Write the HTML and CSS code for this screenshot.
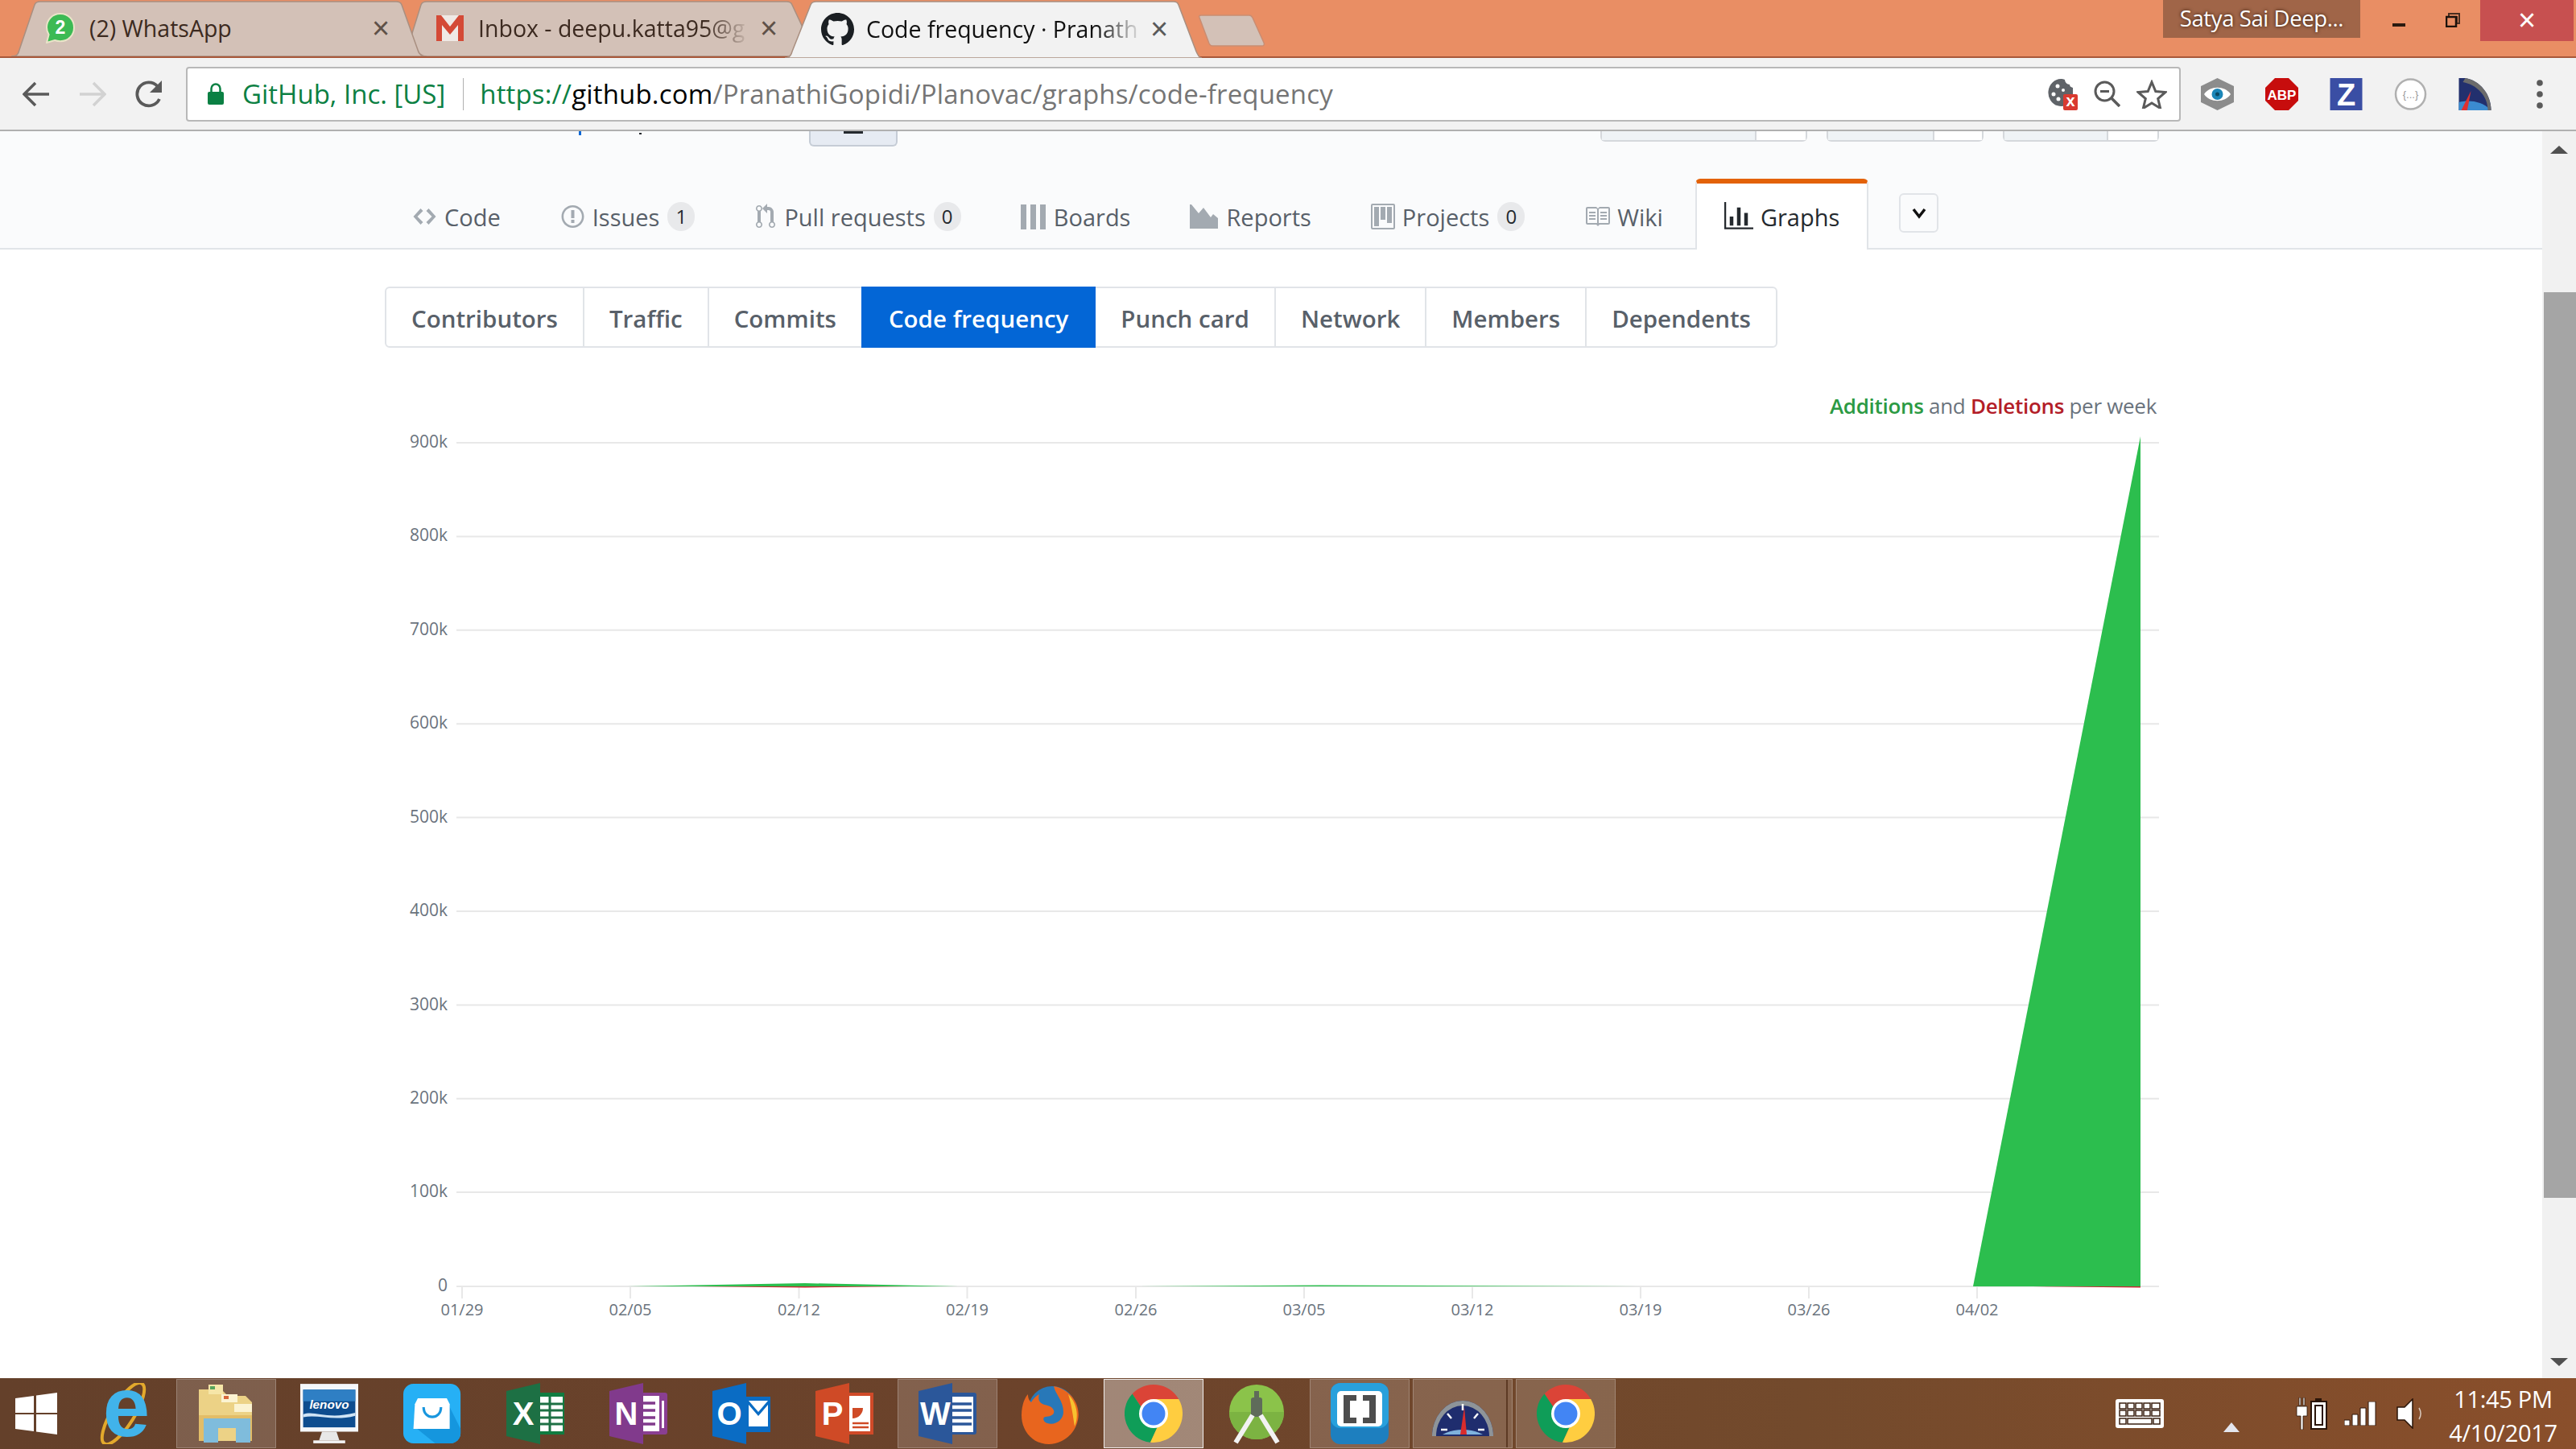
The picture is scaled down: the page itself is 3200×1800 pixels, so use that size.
FILE: index.html
```html
<!DOCTYPE html>
<html lang="en">
<head>
<meta charset="utf-8">
<title>Code frequency</title>
<link rel="stylesheet" href="styles.css">
</head>
<body>
<svg class="defs" width="0" height="0" aria-hidden="true">
  <symbol id="chrome" viewBox="0 0 72 72">
    <path fill="#db4437" d="M67.2 18A36 36 0 0 0 9.6 11.5L24 33 36 18Z"/>
    <path fill="#0f9d58" d="M9.6 11.5A36 36 0 0 0 32 71.8L42 50 24 33Z"/>
    <path fill="#ffcd40" d="M32 71.8A36 36 0 0 0 67.2 18H36L42 50Z"/>
    <circle cx="36" cy="36" r="18" fill="#fff"/>
    <circle cx="36" cy="36" r="14.5" fill="#4285f4"/>
  </symbol>
</svg>
<div class="screen">
  <header class="titlebar">
    <div class="tab tab-one">
      <svg class="tab-shape" viewBox="0 0 516 70" preserveAspectRatio="none"><path d="M0 70C8 70 9 66 10 62L29 6C30 3 32 2 36 2H478C482 2 484 3 485 6L505 62C506 66 508 70 516 70Z" fill="#d3c1b7" stroke="#a98f80" stroke-width="1.5"/></svg>
      <svg class="favicon" viewBox="0 0 36 38"><path d="M18 1C8 1 1 8.500 1 18c0 3.500 1 6.500 2.600 9L1 37l10-3c2 .8 4.500 1.200 7 1.200 10 0 17-7.500 17-17S28 1 18 1Z" fill="#3cba54" stroke="#e9e4c8" stroke-width="2"/><text x="18" y="26" class="wa-num">2</text></svg>
      <span class="tab-title">(2) WhatsApp</span>
      <span class="tab-close">×</span>
    </div>
    <div class="tab tab-two">
      <svg class="tab-shape" viewBox="0 0 511 70" preserveAspectRatio="none"><path d="M0 70 20 6C21 3 23 2 27 2H474C478 2 480 3 481 6L511 70Z" fill="#d3c1b7" stroke="#a98f80" stroke-width="1.5"/></svg>
      <svg class="favicon gmail" viewBox="0 0 38 36"><rect x="2" y="2" width="34" height="32" fill="#efe9e5"/><path d="M2 2h6l11 14L30 2h6v32h-7V14L19 26 9 14v20H2Z" fill="#d44a36"/></svg>
      <span class="tab-title fade">Inbox - deepu.katta95@g</span>
      <span class="tab-close">×</span>
    </div>
    <div class="tab tab-active">
      <svg class="tab-shape" viewBox="0 0 518 72" preserveAspectRatio="none"><path d="M0 72C6 72 8 68 9 64L32 6C33 3 35 2 39 2H483C486 2 488 3 489 6L511 64C513 68 514 72 518 72Z" fill="#f2f2f2" stroke="#a98f80" stroke-width="1.5"/></svg>
      <svg class="favicon gh" viewBox="0 0 16 16"><path fill="#1b1f23" d="M8 0C3.580 0 0 3.580 0 8c0 3.540 2.290 6.530 5.470 7.590.4.070.55-.17.55-.38 0-.19-.01-.82-.01-1.490-2.010.37-2.530-.49-2.690-.94-.09-.23-.48-.94-.82-1.130-.28-.15-.68-.52-.01-.53.63-.01 1.080.58 1.230.82.720 1.210 1.870.87 2.330.66.070-.52.28-.87.51-1.070-1.780-.2-3.640-.89-3.640-3.950 0-.87.31-1.590.82-2.150-.08-.2-.36-1.020.08-2.120 0 0 .67-.21 2.200.82.64-.18 1.320-.27 2-.27.68 0 1.360.09 2 .27 1.530-1.040 2.200-.82 2.200-.82.44 1.100.16 1.920.08 2.120.51.56.82 1.270.82 2.150 0 3.070-1.870 3.750-3.650 3.950.29.25.54.73.54 1.480 0 1.070-.01 1.930-.01 2.200 0 .21.15.46.55.38A8.013 8.013 0 0 0 16 8c0-4.420-3.580-8-8-8z"/></svg>
      <span class="tab-title fade dark">Code frequency · Pranath</span>
      <span class="tab-close">×</span>
    </div>
    <svg class="new-tab" viewBox="0 0 84 40"><path d="M2 4C1 2 2 1 4 1H64C66 1 67 2 68 4L82 35C83 37 82 39 80 39H18C16 39 15 38 14 36Z" fill="#d3c1b7" stroke="#c98d72" stroke-width="1.500"/></svg>
    <div class="window-area">
      <span class="user-chip">Satya Sai Deep...</span>
      <span class="win-min"></span>
      <svg class="win-restore" viewBox="0 0 18 18"><path d="M4 1h13v12h-3V5H4Z" fill="none" stroke="#4a2e20" stroke-width="2"/><rect x="1" y="5" width="12" height="12" fill="none" stroke="#1c120c" stroke-width="2.500"/></svg>
      <span class="win-close">×</span>
    </div>
  </header>

  <div class="toolbar">
    <svg class="nav-ico" viewBox="0 0 34 32"><path d="M33 16H3M16 2 2 16l14 14" fill="none" stroke="#5a5a5a" stroke-width="3.500"/></svg>
    <svg class="nav-ico fwd" viewBox="0 0 34 32"><path d="M1 16h30M18 2l14 14-14 14" fill="none" stroke="#d2d2d2" stroke-width="3.500"/></svg>
    <svg class="nav-ico reload" viewBox="0 0 36 36"><path d="M30 24A14.500 14.500 0 1 1 27.500 8" fill="none" stroke="#5a5a5a" stroke-width="3.800"/><path d="M33 1v15H18Z" fill="#5a5a5a"/></svg>
    <div class="omnibox">
      <svg class="lock" viewBox="0 0 20 27"><path d="M4.500 12V7a5.500 5.500 0 0 1 11 0v5" fill="none" stroke="#0b8043" stroke-width="2.500"/><rect y="11" width="20" height="16" rx="2" fill="#0b8043"/></svg>
      <span class="ev">GitHub, Inc. [US]</span>
      <span class="omni-sep"></span>
      <span class="url"><span class="ev">https://</span><span class="host">github.com</span>/PranathiGopidi/Planovac/graphs/code-frequency</span>
      <span class="omni-icons">
        <svg class="cookie" viewBox="0 0 37 40"><path d="M16 1a16 17 0 1 0 15 24V12c-3-1-4-2-4-4-3 0-6-3-6-6-2-1-3-1-5-1Z" fill="#5f6368"/><circle cx="12" cy="10" r="2.500" fill="#fff"/><circle cx="7" cy="20" r="2.500" fill="#fff"/><circle cx="19" cy="15" r="2" fill="#fff"/><circle cx="13" cy="26" r="2.500" fill="#fff"/><rect x="19" y="20" width="18" height="20" rx="2" fill="#d93a30"/><text x="28" y="35" class="cookie-x">x</text></svg>
        <svg class="zoom-ico" viewBox="0 0 33 33"><circle cx="13.500" cy="13.500" r="11.500" fill="none" stroke="#5a5a5a" stroke-width="3"/><path d="M8 13.500h11" stroke="#5a5a5a" stroke-width="3"/><path d="m21 21 11 11" stroke="#5a5a5a" stroke-width="3.500"/></svg>
        <svg class="star" viewBox="0 0 38 36"><path d="m19 3 4.800 11.500L36 15.500l-9.300 8 2.900 12L19 29l-10.600 6.500 2.900-12-9.300-8 12.200-1Z" fill="none" stroke="#5a5a5a" stroke-width="3"/></svg>
      </span>
    </div>
    <div class="extensions">
      <svg class="ext" viewBox="0 0 41 40"><path d="M20.500 0 41 10v20L20.500 40 0 30V10Z" fill="#8c8c8c"/><path d="M4 20C11 9 30 9 37 20 30 31 11 31 4 20Z" fill="#fff"/><circle cx="20.500" cy="20" r="7" fill="#1b86b8"/><circle cx="20.500" cy="20" r="2.500" fill="#0b4a66"/></svg>
      <svg class="ext" viewBox="0 0 41 40"><path d="M12 0h17l12 12v16L29 40H12L0 28V12Z" fill="#c70d0d"/><text x="20.500" y="27" class="abp">ABP</text></svg>
      <svg class="ext" viewBox="0 0 40 40"><rect width="40" height="40" fill="#3a4ea4"/><text x="20" y="34" class="zed">Z</text></svg>
      <svg class="ext" viewBox="0 0 40 40"><circle cx="20" cy="20" r="18.500" fill="#fff" stroke="#b0b0b0" stroke-width="2.500"/><text x="20" y="25" class="json">{...}</text></svg>
      <svg class="ext" viewBox="0 0 40 40"><path d="M0 0h8c18 3 32 20 32 40H0Z" fill="#22306e"/><path d="M0 30c12-3 28-2 40 10H0Z" fill="#3b8bd0"/><path d="m3 40 12-24-5 26Z" fill="#e03030"/><path d="M8 0c18 3 32 20 32 40h-4C36 22 22 8 5 5Z" fill="#6b6b6b"/></svg>
      <svg class="dots" viewBox="0 0 10 38"><circle cx="5" cy="5" r="3.800" fill="#5a5a5a"/><circle cx="5" cy="19" r="3.800" fill="#5a5a5a"/><circle cx="5" cy="33" r="3.800" fill="#5a5a5a"/></svg>
    </div>
  </div>

  <div class="viewport">
    <main class="page">
      <div class="pagehead">
        <div class="head-remnants">
          <span class="rem-link"></span>
          <span class="rem-dot"></span>
          <span class="rem-btn"><span class="rem-list"></span></span>
          <span class="rem-group first"><span class="rem-main"></span><span class="rem-count"></span></span>
          <span class="rem-group"><span class="rem-main m2"></span><span class="rem-count c2"></span></span>
          <span class="rem-group"><span class="rem-main m3"></span><span class="rem-count c3"></span></span>
        </div>
        <nav class="reponav">
          <a class="nav-item"><svg class="oct w-code" viewBox="0 0 14 16"><path d="M9.500 3 8 4.500 11.500 8 8 11.500 9.500 13 14 8 9.500 3zm-5 0L0 8l4.500 5L6 11.500 2.500 8 6 4.500 4.500 3z"/></svg>Code</a>
          <a class="nav-item"><svg class="oct w-issue" viewBox="0 0 14 16"><path d="M7 2.300c3.140 0 5.700 2.560 5.700 5.700s-2.560 5.700-5.700 5.700A5.710 5.710 0 0 1 1.300 8c0-3.140 2.560-5.700 5.700-5.700zM7 1C3.140 1 0 4.140 0 8s3.140 7 7 7 7-3.140 7-7-3.140-7-7-7zm1 3H6v5h2V4zm0 6H6v2h2v-2z"/></svg>Issues<span class="counter">1</span></a>
          <a class="nav-item"><svg class="oct w-pr" viewBox="0 0 12 16"><path d="M11 11.280V5c-.03-.78-.34-1.470-.94-2.060C9.460 2.350 8.780 2.030 8 2H7V0L4 3l3 3V4h1c.27.020.48.11.69.31.21.2.3.42.31.69v6.280A1.993 1.993 0 0 0 10 15a1.993 1.993 0 0 0 1-3.720zm-1 2.920c-.66 0-1.200-.55-1.200-1.200 0-.65.55-1.200 1.200-1.200.65 0 1.200.55 1.200 1.200 0 .65-.55 1.200-1.200 1.200zM4 3c0-1.110-.89-2-2-2a1.993 1.993 0 0 0-1 3.720v6.560A1.993 1.993 0 0 0 2 15a1.993 1.993 0 0 0 1-3.720V4.720c.59-.34 1-.98 1-1.720zm-.8 10c0 .66-.55 1.200-1.200 1.200-.65 0-1.200-.55-1.200-1.200 0-.65.55-1.200 1.200-1.200.65 0 1.200.55 1.200 1.200zM2 4.200C1.340 4.200.8 3.650.8 3c0-.65.55-1.200 1.200-1.200.65 0 1.200.55 1.200 1.200 0 .65-.55 1.200-1.200 1.200z"/></svg>Pull requests<span class="counter">0</span></a>
          <a class="nav-item"><svg class="oct w-boards" viewBox="0 0 32 32"><path d="M0 1h7v31H0zM12 1h7v31h-7zM24 1h7v31h-7z"/></svg>Boards</a>
          <a class="nav-item"><svg class="oct w-reports" viewBox="0 0 36 30"><path d="M0 0l2 0 9 11 6-7 9 12 3-4 6 5v13H0Z"/></svg>Reports</a>
          <a class="nav-item"><svg class="oct w-projects" viewBox="0 0 15 16"><path fill-rule="evenodd" d="M10 12h3V2h-3v10zm-4-2h3V2H6v8zm-4 4h3V2H2v12zm-1 1h13V1H1v14zM14 0H1a1 1 0 0 0-1 1v14a1 1 0 0 0 1 1h13a1 1 0 0 0 1-1V1a1 1 0 0 0-1-1z"/></svg>Projects<span class="counter">0</span></a>
          <a class="nav-item"><svg class="oct w-wiki" viewBox="0 0 16 16"><path d="M3 5h4v1H3V5zm0 3h4V7H3v1zm0 2h4V9H3v1zm11-5h-4v1h4V5zm0 2h-4v1h4V7zm0 2h-4v1h4V9zm2-6v9c0 .55-.45 1-1 1H9.500l-1 1-1-1H2c-.55 0-1-.45-1-1V3c0-.55.45-1 1-1h5.500l1 1 1-1H15c.55 0 1 .45 1 1zm-8 .5L7.500 3H2v9h6V3.500zm7-.5H9.500l-.5.5V12h6V3z"/></svg>Wiki</a>
          <a class="nav-item selected"><svg class="oct w-graphs" viewBox="0 0 16 16"><path d="M16 14v1H0V0h1v14h15zM5 13H3V8h2v5zm4 0H7V3h2v10zm4 0h-2V6h2v7z"/></svg>Graphs</a>
          <button class="more-btn" type="button" aria-label="More"><svg viewBox="0 0 18 14"><path d="m2 2 7 9 7-9" fill="none" stroke="#111" stroke-width="3.500"/></svg></button>
        </nav>
      </div>

      <div class="subnav">
        <a class="sub-item">Contributors</a><a class="sub-item">Traffic</a><a class="sub-item">Commits</a><a class="sub-item current">Code frequency</a><a class="sub-item">Punch card</a><a class="sub-item">Network</a><a class="sub-item">Members</a><a class="sub-item">Dependents</a>
      </div>

      <p class="legend"><b class="add">Additions</b> and <b class="del">Deletions</b> per week</p>

      <svg class="chart" viewBox="0 535 3158 1177">
        <g class="grid">
          <path d="M567 550H2682M567 666.400H2682M567 782.800H2682M567 899.200H2682M567 1015.600H2682M567 1132H2682M567 1248.400H2682M567 1364.800H2682M567 1481H2682M567 1598H2682"/>
          <path d="M574 1598v15M783 1598v15M992.500 1598v15M1201.500 1598v15M1411 1598v15M1620 1598v15M1829 1598v15M2038 1598v15M2247 1598v15M2456 1598v15"/>
        </g>
        <path class="del-area" d="M860 1598 1000 1599.500 1130 1598ZM2525 1598 2659 1599.500V1598Z"/>
        <path class="add-area" d="M780 1598 1000 1594 1190 1598ZM1415 1598 1640 1596.500 2040 1598Z"/>
        <path class="add-area solid" d="M2451 1598 2659 542V1598Z"/>
        <g class="y-labels">
          <text x="556" y="556">900k</text><text x="556" y="672">800k</text><text x="556" y="789">700k</text><text x="556" y="905">600k</text><text x="556" y="1022">500k</text><text x="556" y="1138">400k</text><text x="556" y="1255">300k</text><text x="556" y="1371">200k</text><text x="556" y="1487">100k</text><text x="556" y="1604">0</text>
        </g>
        <g class="x-labels">
          <text x="574" y="1634">01/29</text><text x="783" y="1634">02/05</text><text x="992.500" y="1634">02/12</text><text x="1201.500" y="1634">02/19</text><text x="1411" y="1634">02/26</text><text x="1620" y="1634">03/05</text><text x="1829" y="1634">03/12</text><text x="2038" y="1634">03/19</text><text x="2247" y="1634">03/26</text><text x="2456" y="1634">04/02</text>
        </g>
      </svg>
    </main>
    <aside class="scrollbar">
      <span class="arrow-up"></span>
      <span class="thumb"></span>
      <span class="arrow-down"></span>
    </aside>
  </div>

  <footer class="taskbar">
    <svg class="start" viewBox="0 0 52 52"><path fill="#fff" d="M0 7 23 4V25H0ZM26 3.500 52 0V25H26ZM0 27H23V48L0 45ZM26 27H52V52L26 48.500Z"/></svg>
    <div class="apps">
      <div class="app"><svg class="app-ico" viewBox="0 0 72 76"><ellipse cx="36" cy="38" rx="14" ry="44" transform="rotate(32 36 38)" fill="none" stroke="#e3a92c" stroke-width="4"/><text x="40" y="66" class="ie">e</text></svg></div>
      <div class="app on"><svg class="app-ico" viewBox="0 0 72 76"><path d="M2 8h28l8 8h22l8 8v48H2Z" fill="#ecd286"/><rect x="14" y="2" width="18" height="12" fill="#f6e6a8"/><rect x="30" y="14" width="20" height="10" fill="#fbf3d2"/><rect x="46" y="26" width="22" height="10" fill="#fbf3d2"/><rect x="16" y="4" width="6" height="4" fill="#58a55c"/><rect x="33" y="16" width="6" height="4" fill="#d8683c"/><path d="M2 40h66v32H48V54H24v18H2Z" fill="#e2bd68"/><path d="M8 44h58v30H48V56H26v18H8Z" fill="#7fbcdc"/></svg></div>
      <div class="app"><svg class="app-ico" viewBox="0 0 80 82"><rect width="80" height="66" fill="#f5f7fa"/><rect x="4" y="8" width="72" height="52" fill="#0d4d8f"/><rect x="4" y="8" width="72" height="16" fill="#2f7fc4"/><text x="40" y="34" class="lenovo">lenovo</text><path d="M4 42c16-6 32 8 72-2v4c-30 8-50-2-72 2Z" fill="#cfe4f5"/><path d="M30 66h20l4 12H26Z" fill="#e8e8e8"/><rect x="18" y="78" width="44" height="4" fill="#f3f3f3"/></svg></div>
      <div class="app"><svg class="app-ico" viewBox="0 0 80 82"><rect width="79" height="82" rx="14" fill="#26b0f5"/><path d="M62 28 79 62v6a14 14 0 0 1-14 14H44L14 58Z" fill="#1596de"/><path d="M16 28 20 20H60l4 8v34H14Z" fill="#fff"/><path d="M28 32c0 18 24 18 24 0" fill="none" stroke="#1896de" stroke-width="3.500"/></svg></div>
      <div class="app"><svg class="app-ico" viewBox="0 0 72 76"><rect x="36" y="12" width="36" height="52" fill="#107c41"/><path d="M0 10 42 0V76L0 66Z" fill="#1d7044"/><path d="M42 17h28v43H42Z" fill="#fff"/><path d="M42 26h28M42 34h28M42 43h28M42 51h28M54 17v43" stroke="#1d7044" stroke-width="3"/><text x="21" y="52" class="letter">X</text></svg></div>
      <div class="app"><svg class="app-ico" viewBox="0 0 72 76"><rect x="38" y="12" width="34" height="52" rx="3" fill="#8a3f92"/><path d="M0 10 42 0V76L0 66Z" fill="#813a8c"/><path d="M42 16h20v44H42Z" fill="#fff"/><path d="M42 25h15M42 34h15M42 43h15M42 51h15" stroke="#813a8c" stroke-width="3.500"/><rect x="65" y="22" width="3" height="34" fill="#fff"/><text x="21" y="52" class="letter">N</text></svg></div>
      <div class="app"><svg class="app-ico" viewBox="0 0 72 76"><path d="M0 10 42 0V76L0 66Z" fill="#0a6cc4"/><rect x="42" y="17" width="30" height="44" fill="#0a6cc4"/><path d="M45 22h24L57 36Z" fill="#fff"/><path d="M45 27v27h24V27L57 41Z" fill="#fff"/><text x="21" y="52" class="letter">O</text></svg></div>
      <div class="app"><svg class="app-ico" viewBox="0 0 72 76"><rect x="38" y="12" width="34" height="52" fill="#d04a28"/><path d="M0 10 42 0V76L0 66Z" fill="#cf4a26"/><path d="M42 16h26v44H42Z" fill="#fff"/><path d="M46 18a13 13 0 1 1 0 26V31h13a13 13 0 0 0-13-13Z" fill="#cf4a26"/><path d="M46 50h20M46 55h20" stroke="#cf4a26" stroke-width="2.500"/><text x="21" y="52" class="letter">P</text></svg></div>
      <div class="app on"><svg class="app-ico" viewBox="0 0 72 76"><rect x="38" y="12" width="34" height="52" rx="3" fill="#2b579a"/><path d="M0 10 42 0V76L0 66Z" fill="#2b579a"/><path d="M42 17h26v44H42Z" fill="#fff"/><path d="M42 26h24M42 34h24M42 43h24M42 51h24" stroke="#2b579a" stroke-width="3.500"/><text x="21" y="52" class="letter">W</text></svg></div>
      <div class="app"><svg class="app-ico" viewBox="0 0 72 76"><circle cx="38" cy="34" r="30" fill="#2878b8"/><path d="M40 4C62 8 74 28 70 46 66 66 48 76 34 76 14 76 0 60 0 40 0 28 4 18 8 14c0 6 2 8 4 10 2-4 6-8 10-10-2 6 0 10 4 12 4 2 12 2 14 8 2 6-6 8-10 8-4 0-4 6 2 8 10 3 20-4 20-14 0-14-10-22-12-32Z" fill="#e8651e"/><path d="M58 14c10 10 14 26 8 40-2-12-4-28-8-40Z" fill="#f7c22f"/></svg></div>
      <div class="app active"><svg class="app-ico" viewBox="0 0 72 76"><use href="#chrome"/></svg></div>
      <div class="app"><svg class="app-ico" viewBox="0 0 72 76"><circle cx="36" cy="36" r="34" fill="#8bc34a"/><path d="M2 36h68a34 34 0 0 1-68 0Z" fill="#7cb342"/><rect x="29" y="18" width="14" height="24" rx="3" fill="#5f6b5a"/><rect x="33" y="10" width="6" height="10" fill="#5f6b5a"/><path d="M31 40 10 74M41 40l21 34" stroke="#f2f2f2" stroke-width="6"/></svg></div>
      <div class="app on"><svg class="app-ico" viewBox="0 0 72 76"><rect width="72" height="76" rx="12" fill="#1d7fbf"/><rect y="0" width="72" height="56" rx="12" fill="#28a0dc"/><rect x="8" y="10" width="56" height="44" rx="5" fill="#fff"/><path d="M32 15H16V50H32V43H24V22H32ZM40 15H56V50H40V43H48V22H40Z" fill="#4d4d4d"/></svg></div>
      <div class="app on stacked"><svg class="app-ico wide" viewBox="0 0 78 76"><path d="M1 66A38 44 0 0 1 77 66Z" fill="#1f2d6e"/><path d="M1 66A38 44 0 0 1 77 66H72A33 38 0 0 0 6 66Z" fill="#8e9499"/><path d="M14 64c14-8 36-8 50 0Z" fill="#7fb2dd"/><path d="m36 64 5-34 3 34Z" fill="#d92c2c"/><path d="M12 58h8M58 58h8M20 38l5 6M58 38l-5 6M39 26v8" stroke="#fff" stroke-width="2.500"/></svg></div>
      <div class="app on"><svg class="app-ico" viewBox="0 0 72 76"><use href="#chrome"/></svg></div>
    </div>
    <div class="tray">
      <svg class="kbd" viewBox="0 0 60 36"><rect width="60" height="36" rx="3" fill="#fff"/><path d="M5 5h8v7H5zM15 5h8v7h-8zM25 5h8v7h-8zM35 5h8v7h-8zM45 5h10v7H45zM5 14h8v7H5zM15 14h8v7h-8zM25 14h8v7h-8zM35 14h8v7h-8zM45 14h10v7H45zM5 24h8v7H5zM15 24h30v7H15zM47 24h8v7h-8z" fill="#fff" stroke="#3a2012" stroke-width="1.500"/></svg>
      <span class="tray-up"></span>
      <svg class="power" viewBox="0 0 40 40"><path d="M4 0h2v10H4zM9 0h2v10H9zM1 11h13v12H9v17H6V23H1Z" fill="#fff" stroke="#2a1509" stroke-width=".8"/><path d="M24 1h8v3h7v36H18V4h6Z" fill="#2a1509"/><path d="M20 6h17v32H20Z" fill="#fff"/><path d="M23 9h11v26H23Z" fill="#2a1509"/><path d="M25 11h7v22h-7Z" fill="#fff"/></svg>
      <svg class="signal" viewBox="0 0 40 30"><path d="M0 23h7v7H0ZM10 16h7v14h-7ZM20 8h7v22h-7ZM30 0h9v30h-9Z" fill="#fff" stroke="#2a1509" stroke-width="1"/></svg>
      <svg class="speaker" viewBox="0 0 34 38"><path d="M1 11h9L20 1v36L10 27H1Z" fill="#fff" stroke="#2a1509" stroke-width="1.500"/><path d="M28 12c3 5 3 9 0 14" fill="none" stroke="#d9cabe" stroke-width="1.500"/></svg>
      <div class="clock"><span>11:45 PM</span><span>4/10/2017</span></div>
    </div>
  </footer>
</div>
</body>
</html>
```
FILE: styles.css
```css
* { box-sizing: border-box; }
html, body { margin: 0; padding: 0; }
body { width: 3200px; height: 1800px; overflow: hidden; font-family: "Open Sans", "Noto Sans", sans-serif; background: #fff; }
.defs { position: absolute; }
.screen { width: 3200px; height: 1800px; display: flex; flex-direction: column; overflow: hidden; }

/* title bar and tabs */
.titlebar { height: 72px; flex: none; display: flex; align-items: flex-start; padding-left: 14px; background: #e98e64; border-bottom: 2px solid #a8583a; }
.tab { position: relative; height: 70px; display: flex; align-items: center; flex: none; color: #3c2a20; font-size: 28.5px; }
.tab-shape { position: absolute; left: 0; top: 0; width: 100%; height: 100%; z-index: -1; }
.tab-one { width: 516px; padding: 0 42px 0 43px; z-index: 3; isolation: isolate; }
.tab-two { width: 511px; margin-left: -27px; padding: 0 44px 0 37px; z-index: 2; isolation: isolate; }
.tab-active { width: 518px; height: 72px; margin-left: -39px; padding: 0 38px 0 45px; z-index: 4; isolation: isolate; }
.favicon { width: 36px; height: 38px; flex: none; }
.gmail { width: 38px; }
.gh { width: 41px; height: 41px; }
.wa-num { fill: #fff; font: 700 23px "Liberation Sans", sans-serif; text-anchor: middle; }
.tab-title { margin-left: 18px; white-space: nowrap; }
.tab-two .tab-title { margin-left: 16px; }
.tab-active .tab-title { margin-left: 15px; color: #111; }
.fade { -webkit-mask-image: linear-gradient(90deg, #000 85%, rgba(0, 0, 0, .12) 100%); mask-image: linear-gradient(90deg, #000 85%, rgba(0, 0, 0, .12) 100%); }
.tab-close { width: 30px; margin-left: auto; flex: none; font-size: 38px; line-height: 1; text-align: center; font-family: "Liberation Sans", sans-serif; color: #5f5148; }
.tab-active .tab-close { color: #5a5a5a; }
.new-tab { width: 84px; height: 40px; margin: 18px 0 0 -5px; flex: none; }
.window-area { margin-left: auto; display: flex; align-items: flex-start; position: relative; height: 52px; }
.user-chip { width: 245px; height: 47px; background: #a06548; color: #fff; font-size: 27.5px; line-height: 46px; text-align: center; text-shadow: 0 0 4px #2a1509; letter-spacing: -.4px; }
.win-min { width: 16px; height: 4px; margin: 29px 0 0 40px; background: #2a1a10; }
.win-restore { width: 18px; height: 18px; margin: 16px 0 0 50px; }
.win-close { width: 116px; height: 51px; margin: 0 3px 0 25px; background: #c75050; color: #fff; font-family: "Liberation Sans", sans-serif; font-size: 38px; line-height: 50px; text-align: center; }

/* toolbar */
.toolbar { height: 91px; flex: none; display: flex; align-items: center; padding-left: 28px; background: #f2f2f2; border-bottom: 2px solid #b0b0b0; }
.nav-ico { width: 34px; height: 32px; flex: none; margin-right: 36px; }
.reload { width: 36px; height: 36px; margin-right: 27px; }
.omnibox { width: 2478px; height: 68px; flex: none; display: flex; align-items: center; padding-left: 25px; background: #fff; border: 2px solid #b8b8b8; border-radius: 4px; font-size: 33px; }
.lock { width: 20px; height: 27px; flex: none; margin-right: 23px; }
.ev { color: #0b8043; }
.omni-sep { width: 1px; height: 40px; margin: 0 20px 0 22px; background: #b0b0b0; }
.url { color: #757575; white-space: nowrap; letter-spacing: .17px; }
.host { color: #000; }
.omni-icons { margin-left: auto; margin-right: 15px; display: flex; align-items: center; gap: 20px; }
.cookie { width: 37px; height: 40px; }
.zoom-ico { width: 33px; height: 33px; }
.star { width: 38px; height: 36px; }
.cookie-x { fill: #fff; font: 700 20px "Liberation Sans", sans-serif; text-anchor: middle; }
.extensions { display: flex; align-items: center; gap: 39px; margin-left: 25px; }
.ext { width: 41px; height: 40px; flex: none; }
.dots { width: 10px; height: 38px; margin-left: 16px; }
.abp { fill: #fff; font: 700 17px "Liberation Sans", sans-serif; text-anchor: middle; }
.zed { fill: #fff; font: 700 38px "Liberation Sans", sans-serif; text-anchor: middle; }
.json { fill: #999; font: 13px "Liberation Sans", sans-serif; text-anchor: middle; }

/* page */
.viewport { flex: 1; display: flex; min-height: 0; }
.page { flex: 1; min-width: 0; overflow: hidden; }
.pagehead { height: 147px; background: #fafbfc; border-bottom: 2px solid #e1e4e8; position: relative; }
.head-remnants { display: flex; align-items: flex-start; height: 19px; padding-left: 719px; }
.rem-link { width: 3px; height: 5px; background: #0366d6; }
.rem-dot { width: 3px; height: 2px; margin: 2px 0 0 72px; background: #24292e; }
.rem-btn { width: 110px; height: 19px; margin-left: 208px; background: #e6ebf3; border: 2px solid #c5ccd6; border-top: 0; border-radius: 0 0 6px 6px; display: flex; justify-content: center; }
.rem-list { width: 24px; height: 3px; background: #24292e; }
.rem-group { display: flex; height: 13px; margin-left: 24px; border: 2px solid #d5d8dc; border-top: 0; border-radius: 0 0 6px 6px; }
.rem-group.first { margin-left: 873px; }
.rem-main { width: 192px; background: #eff3f6; border-right: 2px solid #d5d8dc; }
.rem-count { width: 61px; background: #fff; }
.rem-main.m2 { width: 132px; }
.rem-count.c2 { width: 59px; }
.rem-main.m3 { width: 129px; }
.rem-count.c3 { width: 61px; }
.reponav { position: absolute; left: 478px; bottom: -2px; display: flex; gap: 6px; align-items: flex-start; height: 88px; }
.nav-item { height: 88px; display: flex; align-items: center; padding: 6px 34px 0; color: #586069; font-size: 29px; white-space: nowrap; }
.oct { height: 32px; fill: #a3aab1; flex: none; margin-right: 9px; }
.w-code { width: 31px; }
.w-issue { width: 31px; }
.w-pr { width: 28px; }
.w-boards { width: 32px; }
.w-reports { width: 36px; height: 30px; }
.w-projects { width: 30px; height: 36px; }
.w-wiki { width: 32px; }
.w-graphs { width: 36px; height: 36px; fill: #24292e; }
.counter { width: 34px; height: 36px; margin-left: 10px; border-radius: 18px; background: rgba(27, 31, 35, .08); color: #24292e; font-size: 24px; line-height: 36px; text-align: center; }
.selected { padding: 0 34px; background: #fff; border: 2px solid #e1e4e8; border-top: 6px solid #e36209; border-bottom: 0; border-radius: 6px 6px 0 0; color: #24292e; }
.more-btn { width: 49px; height: 49px; margin: 18px 0 0 32px; padding: 0; background: #fafbfc; border: 2px solid #e1e4e8; border-radius: 6px; display: flex; align-items: center; justify-content: center; }
.more-btn svg { width: 18px; height: 14px; }

.subnav { display: flex; width: max-content; height: 76px; margin: 46px 0 0 478px; border: 2px solid #e1e4e8; border-radius: 6px; }
.sub-item { display: flex; align-items: center; padding: 2px 31px 0; color: #586069; font-size: 29.5px; font-weight: 600; white-space: nowrap; border-left: 2px solid #e1e4e8; }
.sub-item:first-child { border-left: 0; }
.sub-item.current { margin: -2px 0; padding: 2px 34px 0; background: #0366d6; border-left: 0; color: #fff; }
.sub-item.current + .sub-item { border-left: 0; }

.legend { margin: 54px 479px 0 0; font-size: 26px; line-height: 36px; text-align: right; color: #6a737d; letter-spacing: -.3px; }
.add { color: #2b9a43; font-weight: 600; }
.del { color: #b31d28; font-weight: 600; }
.chart { display: block; width: 3158px; height: 1177px; margin-top: 13px; }
.grid path { fill: none; stroke: #e8e8e8; stroke-width: 2; }
.add-area { fill: #2cbe4e; }
.del-area { fill: #cb2431; }
.y-labels text { font-size: 21px; fill: #6a737d; text-anchor: end; }
.x-labels text { font-size: 20px; fill: #6a737d; text-anchor: middle; }

.scrollbar { width: 42px; flex: none; position: relative; background: #f1f1f1; display: flex; flex-direction: column; align-items: center; }
.arrow-up { width: 0; height: 0; margin: 18px 0 0 0; border: 11px solid transparent; border-top: 0; border-bottom: 10px solid #505050; }
.thumb { width: 40px; height: 1125px; margin: 172px 0 0 2px; background: #a5a5a5; }
.arrow-down { width: 0; height: 0; margin-top: auto; margin-bottom: 15px; border: 11px solid transparent; border-bottom: 0; border-top: 10px solid #505050; }

/* taskbar */
.taskbar { height: 88px; flex: none; display: flex; align-items: center; background: linear-gradient(90deg, #64402a 0%, #6c432b 40%, #734a2c 70%, #8a4f2b 100%); }
.start { width: 52px; height: 52px; margin-left: 19px; flex: none; }
.apps { display: flex; gap: 4px; margin-left: 20px; height: 86px; }
.app { width: 124px; height: 86px; flex: none; display: flex; align-items: center; justify-content: center; border: 1px solid transparent; position: relative; }
.app.on { background: rgba(255, 255, 255, .16); border-color: rgba(255, 255, 255, .22); }
.app.active { background: rgba(255, 255, 255, .36); border-color: rgba(255, 255, 255, .85); }
.stacked::after { content: ""; position: absolute; right: 5px; top: 0; bottom: 0; width: 2px; background: #5d3a24; }
.app-ico { width: 72px; height: 76px; }
.app-ico.wide { width: 78px; }
.ie { fill: #41b3ea; font: 700 105px "Liberation Sans", sans-serif; text-anchor: middle; }
.letter { fill: #fff; font: 700 40px "Liberation Sans", sans-serif; text-anchor: middle; }
.lenovo { fill: #fff; font: italic 700 17px "Liberation Sans", sans-serif; text-anchor: middle; }
.tray { margin-left: auto; display: flex; align-items: center; height: 100%; }
.kbd { width: 60px; height: 36px; }
.tray-up { width: 0; height: 0; margin: 34px 0 0 74px; border: 10px solid transparent; border-top: 0; border-bottom: 12px solid #e4e6ee; }
.power { width: 40px; height: 40px; margin-left: 70px; }
.signal { width: 40px; height: 30px; margin-left: 20px; }
.speaker { width: 34px; height: 38px; margin-left: 25px; }
.clock { width: 155px; margin: 5px 13px 0 21px; display: flex; flex-direction: column; align-items: center; color: #fff; font-size: 29px; line-height: 42px; letter-spacing: -.3px; }
```
